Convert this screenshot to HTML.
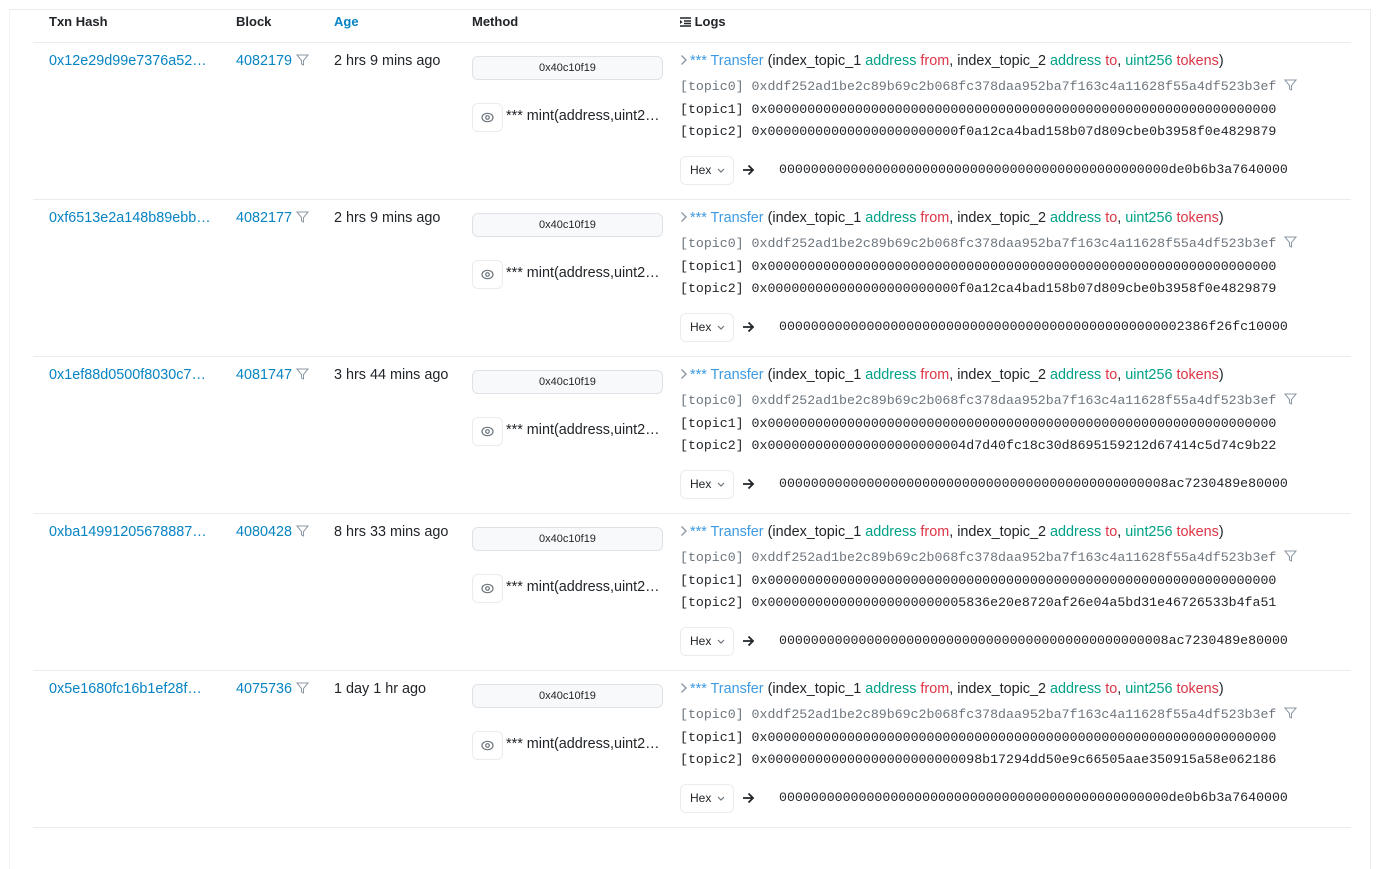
<!DOCTYPE html>
<html><head><meta charset="utf-8"><style>
*{margin:0;padding:0;box-sizing:border-box}
body{width:1376px;height:858px;background:#fff;font-family:"Liberation Sans",sans-serif;font-size:14.4px;color:#212529;position:relative;overflow:hidden}
.card{position:absolute;left:9px;top:9px;width:1362px;height:860px;border-top:1px solid #e9ecef;border-left:1px solid #f1f3f5;border-right:1px solid #e9ecef}
.tb{position:absolute;top:-10px;height:10px;border:1px solid #e9ecef;border-top:none;border-radius:0 0 6px 6px}
.a{position:absolute;white-space:nowrap}
.h{font-weight:bold;font-size:13px;top:14px}
.line{position:absolute;left:33px;width:1318px;height:1px;background:#e9ecef}
.lk{color:#0784c3}
.mono{font-family:"Liberation Mono",monospace;font-size:13.25px}
.badge{position:absolute;left:472px;width:191px;height:24px;background:#f8f9fa;border:1px solid #dee2e6;border-radius:6px;font-size:11px;text-align:center;line-height:22px}
.eye{position:absolute;left:472px;width:31px;height:29px;border:1px solid #e9ecef;border-radius:6px}
.hex{position:absolute;left:680px;width:54px;height:29px;border:1px solid #e9ecef;border-radius:6px;font-size:12px;line-height:27px;padding-left:9px}
.g{color:#6c757d}.gr{color:#00a186}.rd{color:#dc3545}.bl{color:#3d9ae2}
</style></head><body>
<div class="card"></div>
<div class="tb" style="left:1293px;width:25px"></div>
<div class="tb" style="left:1339px;width:28px"></div>
<div class="a h" style="left:49px">Txn Hash</div>
<div class="a h" style="left:236px">Block</div>
<div class="a h lk" style="left:334px">Age</div>
<div class="a h" style="left:472px">Method</div>
<div class="a h" style="left:680px"><svg width="11" height="10" viewBox="0 0 11 10" style="vertical-align:-1px"><path d="M0 1h11M4 4h7M4 6.5h7M0 9h11" stroke="#212529" stroke-width="1.4"/><path d="M0 3l2.5 2-2.5 2z" fill="#212529"/></svg> Logs</div>
<div class="line" style="top:42px"></div>
<div id="rows"></div>
<script>
var d=[["0x12e29d99e7376a52…","4082179","2 hrs 9 mins ago","000000000000000000000000f0a12ca4bad158b07d809cbe0b3958f0e4829879","de0b6b3a7640000"],
["0xf6513e2a148b89ebb…","4082177","2 hrs 9 mins ago","000000000000000000000000f0a12ca4bad158b07d809cbe0b3958f0e4829879","2386f26fc10000"],
["0x1ef88d0500f8030c7…","4081747","3 hrs 44 mins ago","0000000000000000000000004d7d40fc18c30d8695159212d67414c5d74c9b22","8ac7230489e80000"],
["0xba14991205678887…","4080428","8 hrs 33 mins ago","0000000000000000000000005836e20e8720af26e04a5bd31e46726533b4fa51","8ac7230489e80000"],
["0x5e1680fc16b1ef28f…","4075736","1 day 1 hr ago","98b17294dd50e9c66505aae350915a58e062186","de0b6b3a7640000"]];
var h="";
var fil='<svg width="13" height="12" viewBox="0 0 13 12" style="vertical-align:-1px"><path d="M1 1h11L7.5 6.5V11L5.5 10V6.5z" fill="none" stroke="#8c98a4" stroke-width="1"/></svg>';
var chev='<svg width="8" height="12" viewBox="0 0 8 12" style="vertical-align:-1px;margin-right:2px"><path d="M1.5 1.5l4.5 4.5-4.5 4.5" fill="none" stroke="#8c98a4" stroke-width="1.4"/></svg>';
d.forEach(function(r,i){var y=42+i*157;
var t2="0x"+r[3].padStart(64,"0"), dat=r[4].padStart(64,"0");
h+='<div class="a lk" style="left:49px;top:'+(y+11)+'px">'+r[0]+'</div>';
h+='<div class="a" style="left:236px;top:'+(y+11)+'px"><span class="lk">'+r[1]+'</span> '+fil+'</div>';
h+='<div class="a" style="left:334px;top:'+(y+11)+'px">'+r[2]+'</div>';
h+='<div class="badge" style="top:'+(y+14)+'px">0x40c10f19</div>';
h+='<div class="eye" style="top:'+(y+61)+'px"><svg width="13" height="13" viewBox="0 0 13 13" style="position:absolute;left:8px;top:7px"><ellipse cx="6.5" cy="6.5" rx="5.5" ry="4.2" fill="none" stroke="#6c757d" stroke-width="1.2"/><circle cx="6.5" cy="6.5" r="1.8" fill="none" stroke="#6c757d" stroke-width="1.2"/></svg></div>';
h+='<div class="a" style="left:506px;top:'+(y+66)+'px">*** mint(address,uint2…</div>';
h+='<div class="a" style="left:680px;top:'+(y+11)+'px">'+chev+'<span class="bl">*** Transfer</span> (index_topic_1 <span class="gr">address</span> <span class="rd">from</span>, index_topic_2 <span class="gr">address</span> <span class="rd">to</span>, <span class="gr">uint256</span> <span class="rd">tokens</span>)</div>';
h+='<div class="a mono g" style="left:680px;top:'+(y+37)+'px">[topic0] 0xddf252ad1be2c89b69c2b068fc378daa952ba7f163c4a11628f55a4df523b3ef '+fil+'</div>';
h+='<div class="a mono" style="left:680px;top:'+(y+60)+'px">[topic1] 0x0000000000000000000000000000000000000000000000000000000000000000</div>';
h+='<div class="a mono" style="left:680px;top:'+(y+82)+'px">[topic2] '+t2+'</div>';
h+='<div class="hex" style="top:'+(y+114)+'px">Hex <svg width="8" height="5" viewBox="0 0 8 5" style="vertical-align:1px;margin-left:2px"><path d="M1 1l3 3 3-3" fill="none" stroke="#6c757d" stroke-width="1.2"/></svg></div>';
h+='<svg class="a" style="left:742px;top:'+(y+122)+'px" width="13" height="12" viewBox="0 0 13 12"><path d="M1 6h10M6.5 1.5L11 6l-4.5 4.5" fill="none" stroke="#212529" stroke-width="1.8"/></svg>';
h+='<div class="a mono" style="left:779px;top:'+(y+120)+'px">'+dat+'</div>';
h+='<div class="line" style="top:'+(y+157)+'px"></div>';
});
document.getElementById("rows").innerHTML=h;
</script>
</body></html>
